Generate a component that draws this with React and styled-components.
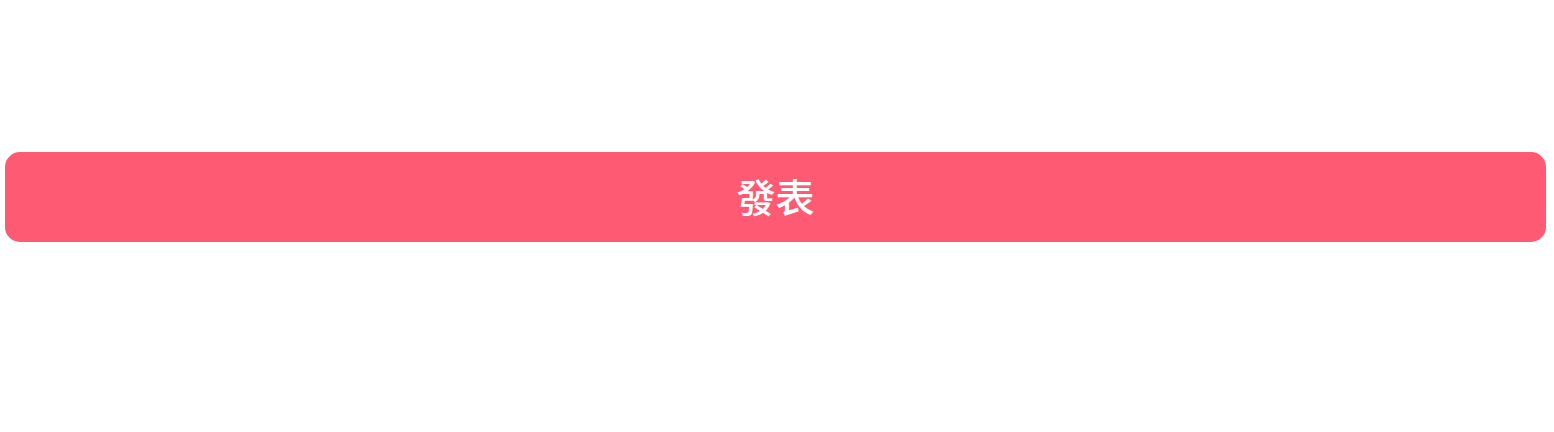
import React from "react";
import styled, { createGlobalStyle } from "styled-components";

const GlobalStyle = createGlobalStyle`
  body {
    margin: 0;
    background: #fff;
  }
`;

const Page = styled.main`
  display: flex;
  padding: 152px 8px 152px 5px;
`;

const SubmitButton = styled.button`
  flex: 1;
  height: 90px;
  padding: 0 16px 4px;
  border: 0;
  border-radius: 15px;
  background: #ff5a74;
  color: #fff;
  font: 500 39px/56px "Noto Sans CJK TC", sans-serif;
  cursor: pointer;
`;

export default function App() {
  return (
    <>
      <GlobalStyle />
      <Page>
        <SubmitButton type="submit">發表</SubmitButton>
      </Page>
    </>
  );
}
